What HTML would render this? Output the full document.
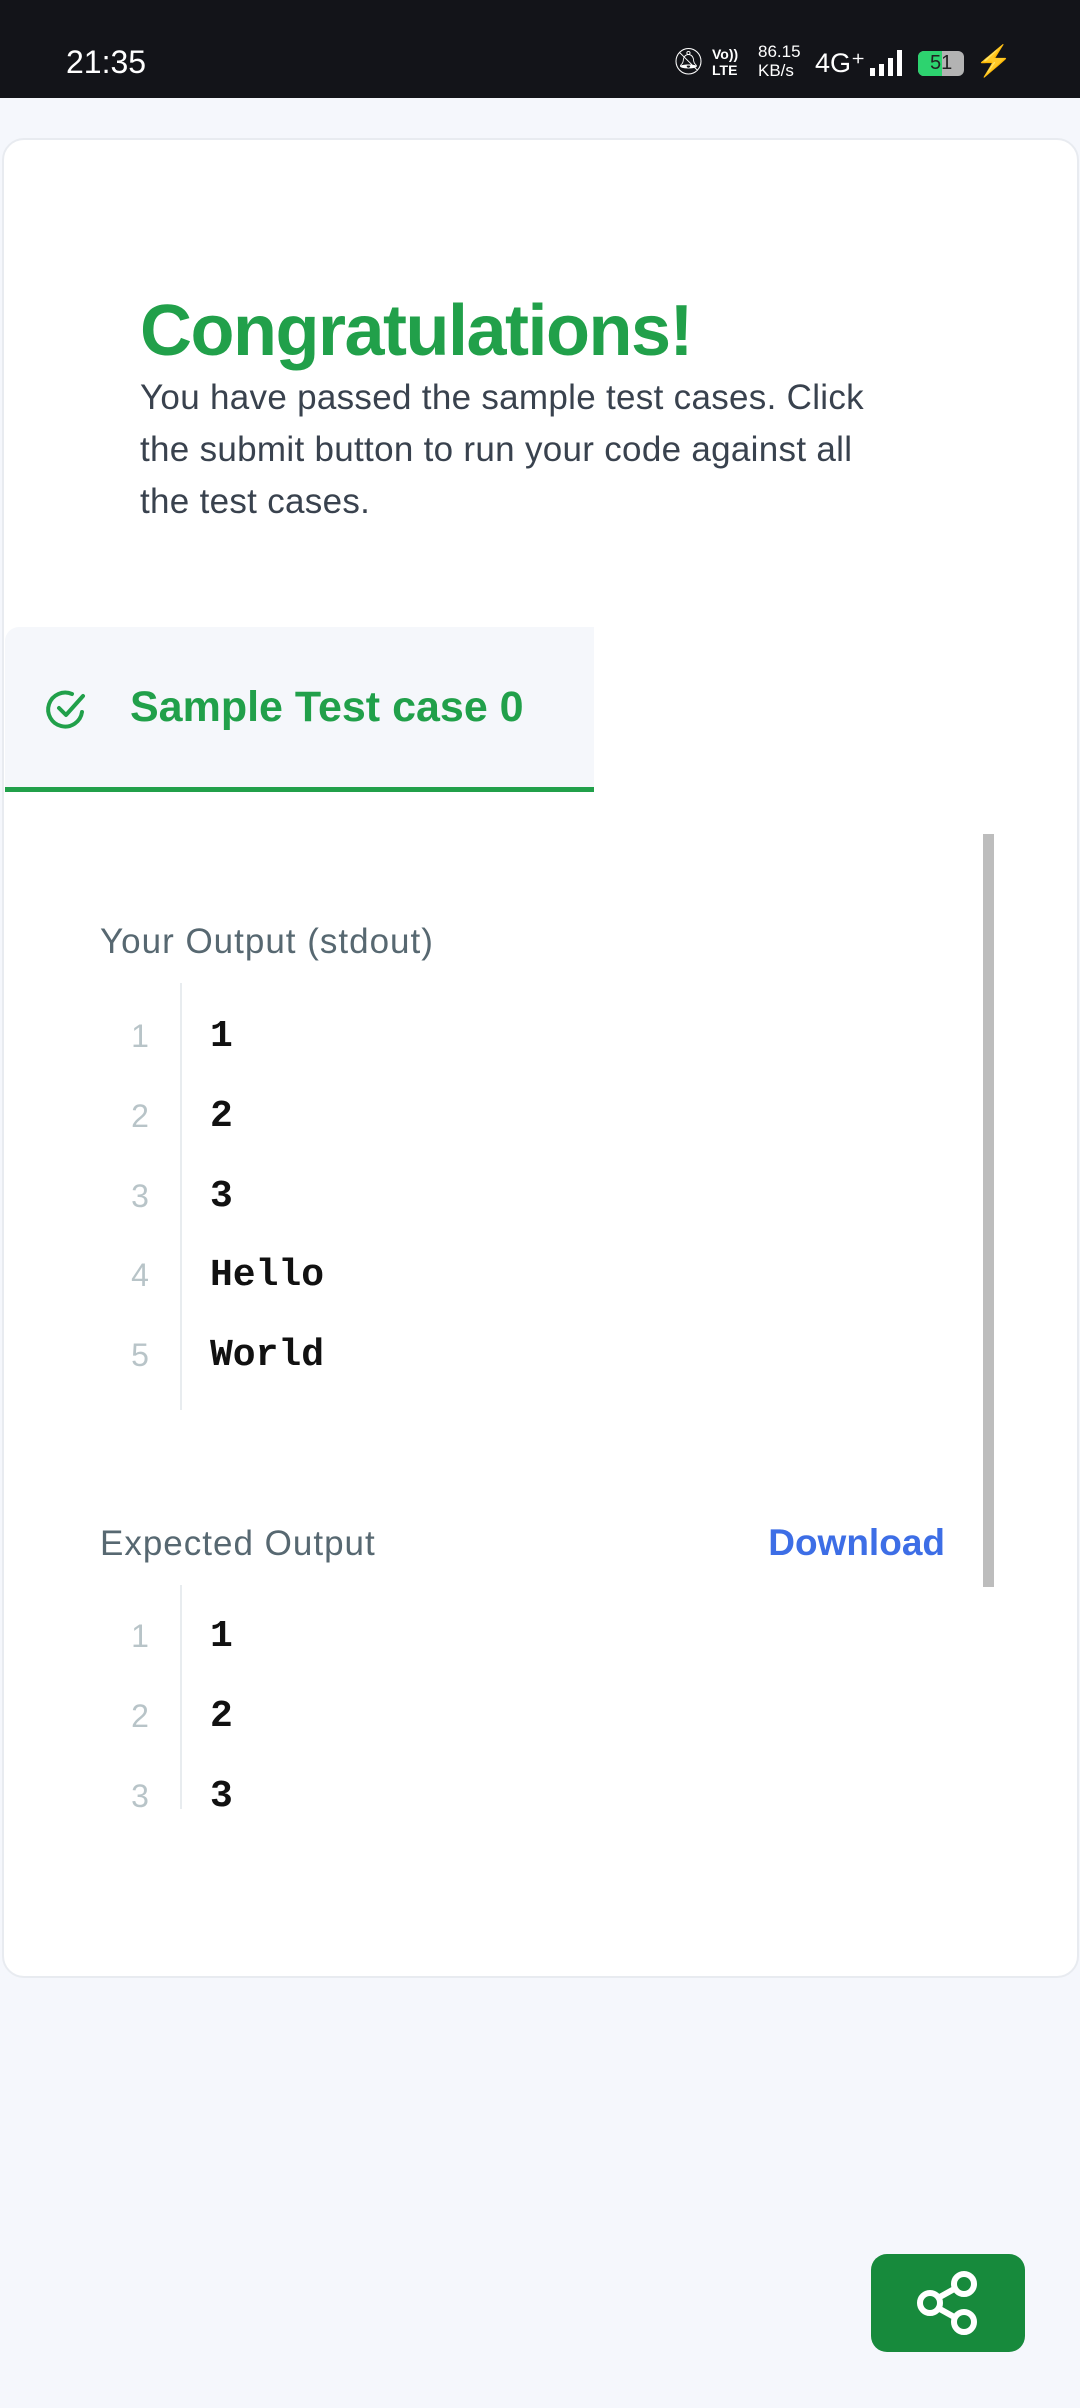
<!DOCTYPE html>
<html><head><meta charset="utf-8"><style>
*{margin:0;padding:0;box-sizing:border-box}
body{width:1080px;height:2408px;background:#f5f7fc;position:relative;overflow:hidden;font-family:"Liberation Sans",sans-serif}
.abs{position:absolute}
.sb{left:0;top:0;width:1080px;height:98px;background:#131419;color:#fff}
.card{left:2px;top:138px;width:1077px;height:1840px;background:#fff;border:2px solid #e8ebf0;border-radius:22px}
.mono{font-family:"Liberation Mono",monospace;font-weight:bold;font-size:38px;color:#111}
.ln{font-size:32px;color:#b8c4c8;width:40px;text-align:center}
</style></head><body>
<div class="abs sb">
<div class="abs" style="left:66px;top:44px;font-size:32px;">21:35</div>
<div class="abs" style="left:672px;top:46px;font-size:26px;">🔕︎</div>
<div class="abs" style="left:712px;top:46px;font-size:14px;line-height:16px;font-weight:bold">Vo))<br>LTE</div>
<div class="abs" style="left:758px;top:42px;font-size:17px;line-height:19px">86.15<br>KB/s</div>
<div class="abs" style="left:815px;top:48px;font-size:27px">4G⁺</div>
<div class="abs" style="left:870px;top:52px;width:36px;height:24px;display:flex;gap:4px;align-items:flex-end">
<i style="width:5px;height:8px;background:#fff"></i><i style="width:5px;height:12px;background:#fff"></i><i style="width:5px;height:18px;background:#fff"></i><i style="width:5px;height:26px;background:#fff"></i></div>
<div class="abs" style="left:918px;top:51px;width:46px;height:25px;border-radius:6px;background:#b3b3b3;overflow:hidden"><div style="width:24px;height:25px;background:#2dd36f"></div><span class="abs" style="left:12px;top:1px;font-size:20px;color:#222">51</span></div>
<div class="abs" style="left:975px;top:44px;font-size:30px;color:#f5c518">⚡</div>
</div>
<div class="abs card"></div>
<div class="abs" style="left:140px;top:290px;font-size:72px;font-weight:bold;color:#21a04a;letter-spacing:-1.5px">Congratulations!</div>
<div class="abs" style="left:140px;top:372px;width:900px;font-size:35px;line-height:52px;color:#39424e;letter-spacing:0.3px">You have passed the sample test cases. Click<br>the submit button to run your code against all<br>the test cases.</div>
<div class="abs" style="left:5px;top:627px;width:589px;height:165px;background:#f5f7fb;border-top-left-radius:14px;border-bottom:5px solid #21a04a"></div>
<svg class="abs" style="left:44px;top:686px" width="46" height="46" viewBox="0 0 46 46"><path d="M38 26A17 17 0 1 1 28 8" fill="none" stroke="#21a04a" stroke-width="4" stroke-linecap="round"/><path d="M15 22l7 7 17-19" fill="none" stroke="#21a04a" stroke-width="4" stroke-linecap="round" stroke-linejoin="round"/></svg>
<div class="abs" style="left:130px;top:683px;font-size:43px;font-weight:bold;color:#21a04a">Sample Test case 0</div>
<div class="abs" style="left:983px;top:834px;width:11px;height:753px;background:#bdbdbd"></div>
<div class="abs" style="left:100px;top:922px;font-size:35px;letter-spacing:1px;color:#576871">Your Output (stdout)</div>
<div class="abs" style="left:180px;top:983px;width:2px;height:427px;background:#e8ecef"></div>
<div class="abs ln" style="left:120px;top:1018px">1</div><div class="abs mono" style="left:210px;top:1015px">1</div>
<div class="abs ln" style="left:120px;top:1098px">2</div><div class="abs mono" style="left:210px;top:1095px">2</div>
<div class="abs ln" style="left:120px;top:1178px">3</div><div class="abs mono" style="left:210px;top:1175px">3</div>
<div class="abs ln" style="left:120px;top:1257px">4</div><div class="abs mono" style="left:210px;top:1254px">Hello</div>
<div class="abs ln" style="left:120px;top:1337px">5</div><div class="abs mono" style="left:210px;top:1334px">World</div>
<div class="abs" style="left:100px;top:1524px;font-size:35px;letter-spacing:1px;color:#576871">Expected Output</div>
<div class="abs" style="left:745px;top:1522px;width:200px;text-align:right;font-size:37px;font-weight:bold;color:#3d6ee6">Download</div>
<div class="abs" style="left:180px;top:1585px;width:2px;height:224px;background:#e8ecef"></div>
<div class="abs ln" style="left:120px;top:1618px">1</div><div class="abs mono" style="left:210px;top:1615px">1</div>
<div class="abs ln" style="left:120px;top:1698px">2</div><div class="abs mono" style="left:210px;top:1695px">2</div>
<div class="abs ln" style="left:120px;top:1778px">3</div><div class="abs mono" style="left:210px;top:1775px">3</div>
<div class="abs" style="left:871px;top:2254px;width:154px;height:98px;background:#178a3c;border-radius:16px"></div>
<svg class="abs" style="left:871px;top:2254px" width="154" height="98" viewBox="0 0 154 98"><g fill="none" stroke="#fff" stroke-width="6"><circle cx="93" cy="30" r="10"/><circle cx="59" cy="49" r="10"/><circle cx="93" cy="68" r="10"/><path d="M67 44l18-10M67 54l18 10"/></g></svg>
</body></html>
